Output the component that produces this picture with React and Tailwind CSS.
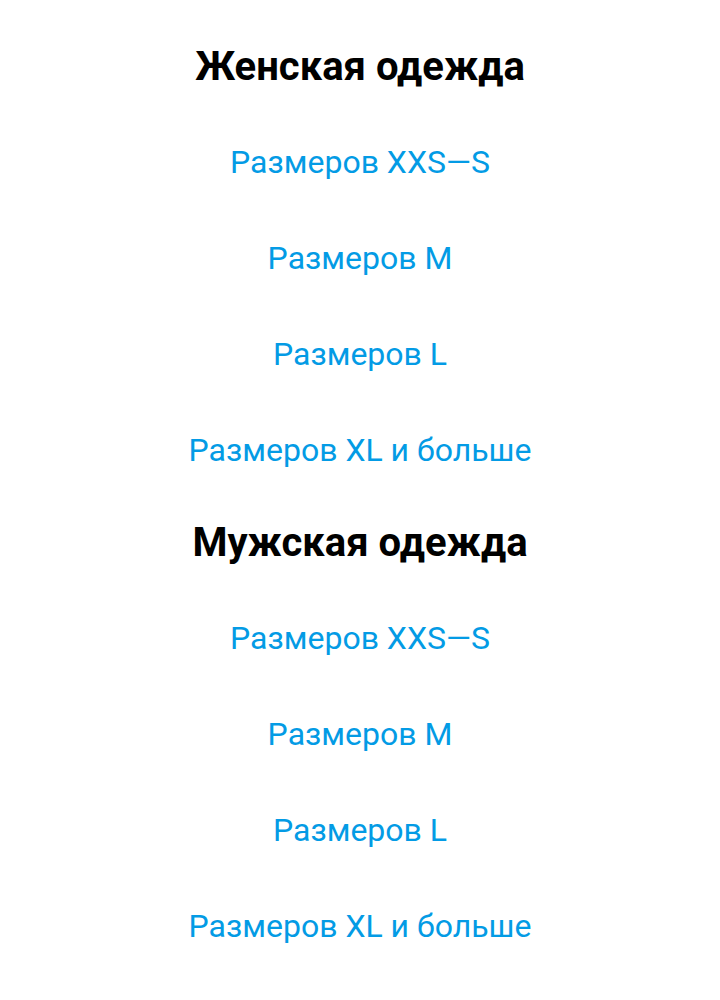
const sections = [
  { title: 'Женская одежда', sizes: ['XXS—S', 'M', 'L', 'XL и больше'] },
  { title: 'Мужская одежда', sizes: ['XXS—S', 'M', 'L', 'XL и больше'] },
];

export default function App() {
  return (
    <div className="min-h-screen bg-white pt-[22px] text-center font-['Roboto',sans-serif]">
      {sections.map((section) => (
        <section key={section.title}>
          <h2 className="h-[92px] pt-[22px] text-[40px] font-bold leading-[46px] text-black">
            {section.title}
          </h2>
          <ul>
            {section.sizes.map((size) => (
              <li key={size} className="flex h-[96px] items-center justify-center">
                <a href="#" className="text-[32px] leading-[40px] text-[#039be5]">
                  Размеров {size}
                </a>
              </li>
            ))}
          </ul>
        </section>
      ))}
    </div>
  );
}
